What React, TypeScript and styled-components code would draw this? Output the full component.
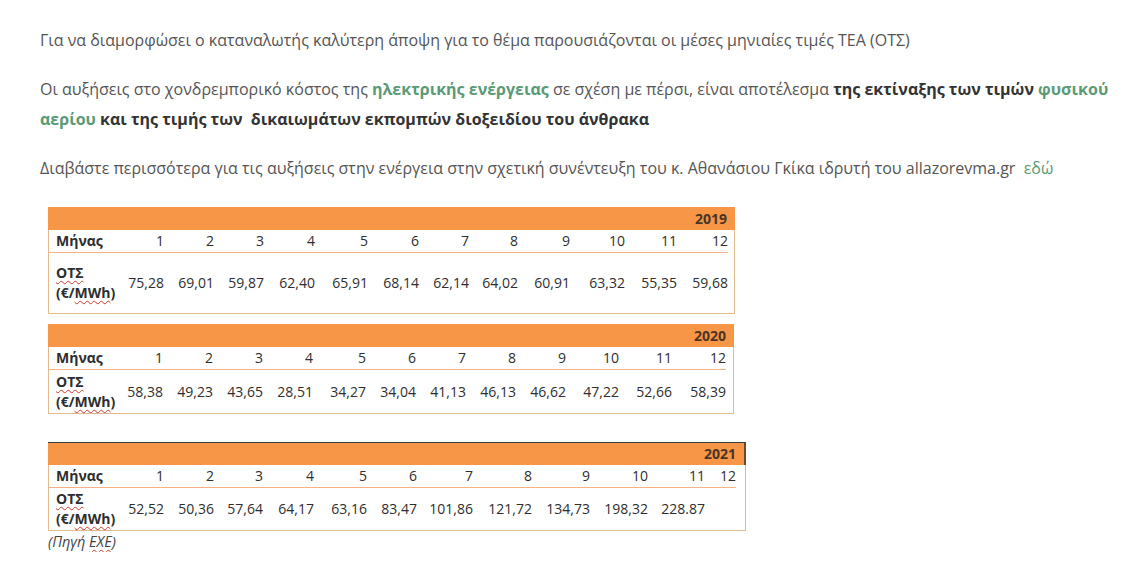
import React from "react";
import styled, { createGlobalStyle } from "styled-components";

const Global = createGlobalStyle`
  html, body { margin: 0; padding: 0; background: #ffffff; }
  body { font-family: "Open Sans", "Noto Sans", sans-serif; }
`;

const Page = styled.div`
  padding: 25px 0 0 40px;
  width: 1075px;
  color: #555555;
  font-size: 16px;
  line-height: 30px;
`;

const Para = styled.p`
  margin: 0 0 19px 0;
`;

const Green = styled.span<{ $bold?: boolean }>`
  color: #5b9a76;
  font-weight: ${(p) => (p.$bold ? 700 : 400)};
`;

const Strong = styled.strong`
  color: #333333;
  font-weight: 700;
`;

const Tables = styled.div`
  margin: 24px 0 0 8px;
  display: flex;
  flex-direction: column;
`;

const TableBox = styled.div<{ $gap: number; $width: number }>`
  margin-top: ${(p) => p.$gap}px;
  width: ${(p) => p.$width}px;
  font-family: "Open Sans", "Noto Sans", sans-serif;
  font-size: 14px;
  color: #2e2e2e;
  line-height: 20px;
`;

const YearBar = styled.div<{ $dark?: boolean }>`
  height: 23px;
  background: #f79646;
  display: flex;
  justify-content: flex-end;
  align-items: center;
  padding-right: 8px;
  font-weight: 700;
  color: #4a3526;
  box-sizing: border-box;
  border-top: ${(p) => (p.$dark ? "1px solid #3a3a3a" : "none")};
  border-right: ${(p) => (p.$dark ? "2px solid #6b4a2e" : "none")};
`;

const Grid = styled.div<{ $cols: string }>`
  display: grid;
  grid-template-columns: ${(p) => p.$cols};
  border: 1px solid #e3b98f;
  border-top: none;
  padding-right: 8px;
`;

const Cell = styled.div<{ $h: number; $label?: boolean; $top?: boolean }>`
  height: ${(p) => p.$h}px;
  display: flex;
  align-items: center;
  justify-content: ${(p) => (p.$label ? "flex-start" : "flex-end")};
  padding-left: ${(p) => (p.$label ? "7px" : "0")};
  font-weight: ${(p) => (p.$label ? 700 : 400)};
  border-bottom: ${(p) => (p.$top ? "1px solid #f4b183" : "none")};
  white-space: nowrap;
`;

const LabelStack = styled.div`
  display: flex;
  flex-direction: column;
  line-height: 20px;
`;

const Wavy = styled.span`
  text-decoration: underline wavy #d33a2c;
  text-decoration-thickness: 1px;
  text-underline-offset: 2px;
`;

const Source = styled.div`
  margin-top: 1px;
  font-size: 14.5px;
  font-style: italic;
  color: #444444;
  line-height: 20px;
`;

type TableData = {
  year: string;
  cols: string;
  width: number;
  values: string[];
  dataH: number;
  gap: number;
  dark?: boolean;
};

const tables: TableData[] = [
  {
    year: "2019",
    width: 687,
    cols: "67px 48px 50px 50px 51px 53px 51px 50px 49px 52px 55px 52px 51px",
    values: ["75,28", "69,01", "59,87", "62,40", "65,91", "68,14", "62,14", "64,02", "60,91", "63,32", "55,35", "59,68"],
    dataH: 60,
    gap: 0,
  },
  {
    year: "2020",
    width: 686,
    cols: "67px 47px 50px 50px 50px 53px 50px 50px 50px 50px 53px 53px 54px",
    values: ["58,38", "49,23", "43,65", "28,51", "34,27", "34,04", "41,13", "46,13", "46,62", "47,22", "52,66", "58,39"],
    dataH: 43,
    gap: 10,
  },
  {
    year: "2021",
    width: 698,
    cols: "67px 48px 50px 49px 51px 53px 50px 56px 59px 58px 58px 57px 31px",
    values: ["52,52", "50,36", "57,64", "64,17", "63,16", "83,47", "101,86", "121,72", "134,73", "198,32", "228.87", ""],
    dataH: 42,
    gap: 28,
    dark: true,
  },
];

const months = Array.from({ length: 12 }, (_, i) => String(i + 1));

function PriceTable({ t }: { t: TableData }) {
  return (
    <TableBox $gap={t.gap} $width={t.width}>
      <YearBar $dark={t.dark}>{t.year}</YearBar>
      <Grid $cols={t.cols}>
        <Cell $h={22} $label $top>
          Μήνας
        </Cell>
        {months.map((m) => (
          <Cell key={m} $h={22} $top>
            {m}
          </Cell>
        ))}
        <Cell $h={t.dataH} $label>
          <LabelStack>
            <Wavy>ΟΤΣ</Wavy>
            <span>
              (€/<Wavy>MWh</Wavy>)
            </span>
          </LabelStack>
        </Cell>
        {t.values.map((v, i) => (
          <Cell key={i} $h={t.dataH}>
            {v}
          </Cell>
        ))}
      </Grid>
    </TableBox>
  );
}

export default function App() {
  return (
    <>
      <Global />
      <Page>
        <Para>
          Για να διαμορφώσει ο καταναλωτής καλύτερη άποψη για το θέμα παρουσιάζονται οι μέσες μηνιαίες τιμές ΤΕΑ (ΟΤΣ)
        </Para>
        <Para>
          Οι αυξήσεις στο χονδρεμπορικό κόστος της <Green $bold>ηλεκτρικής ενέργειας</Green> σε σχέση με πέρσι, είναι
          αποτέλεσμα <Strong>της εκτίναξης των τιμών</Strong> <Green $bold>φυσικού αερίου</Green>{" "}
          <Strong>και της τιμής των &nbsp;δικαιωμάτων εκπομπών διοξειδίου του άνθρακα</Strong>
        </Para>
        <Para>
          Διαβάστε περισσότερα για τις αυξήσεις στην ενέργεια στην σχετική συνέντευξη του κ. Αθανάσιου Γκίκα ιδρυτή του
          allazorevma.gr &nbsp;<Green>εδώ</Green>
        </Para>
        <Tables>
          {tables.map((t) => (
            <PriceTable key={t.year} t={t} />
          ))}
          <Source>
            (Πηγή <Wavy>ΕΧΕ</Wavy>)
          </Source>
        </Tables>
      </Page>
    </>
  );
}
